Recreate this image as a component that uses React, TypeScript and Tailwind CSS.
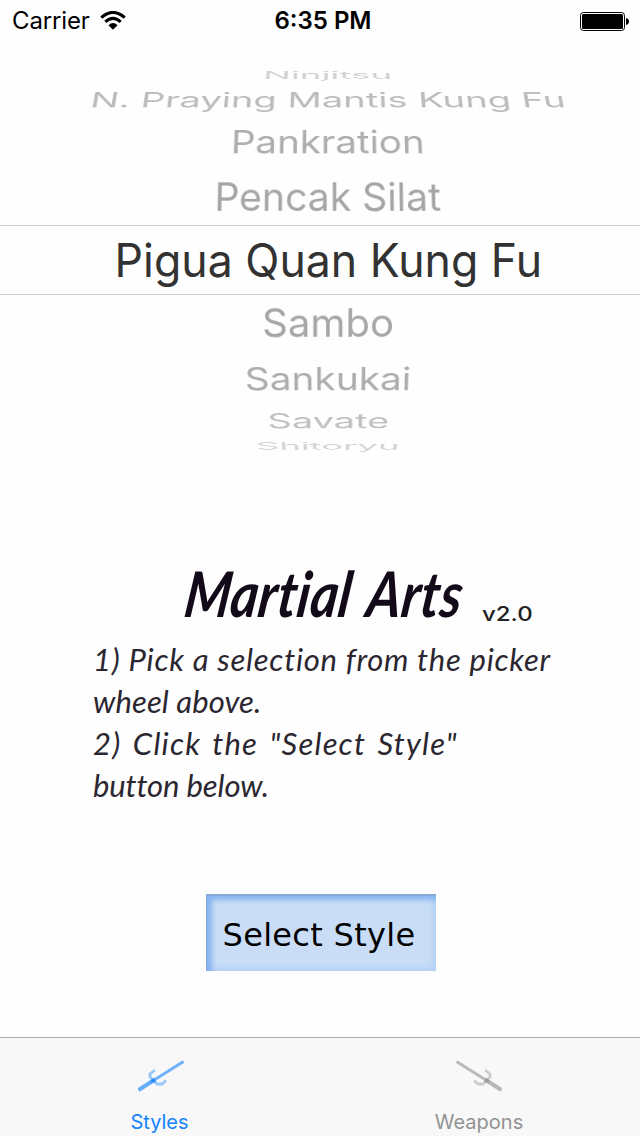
import React, { useState } from 'react';

interface PickerRow {
    label: string;
    row: string;
    text: string;
}

const pickerRows: PickerRow[] = [
    { label: 'Ninjitsu', row: 'h-[23px]', text: 'text-[#d2d2d2] [transform:perspective(2200px)_rotateX(76deg)_scaleX(0.875)]' },
    { label: 'N. Praying Mantis Kung Fu', row: 'h-[28px]', text: 'text-[#bcbcbc] [transform:perspective(2200px)_rotateX(60.5deg)_scaleX(0.906)]' },
    { label: 'Pankration', row: 'h-[55px]', text: 'text-[#adadad] [transform:perspective(2200px)_rotateX(41deg)_scaleX(0.915)]' },
    { label: 'Pencak Silat', row: 'h-[56px]', text: 'text-[#a6a6a6] [transform:perspective(2200px)_rotateX(23deg)_scaleX(0.93)]' },
    { label: 'Pigua Quan Kung Fu', row: 'h-[70px] border-y border-[#c8c8c8]', text: 'text-[46px] text-[#323232] [transform:scaleX(0.97)]' },
    { label: 'Sambo', row: 'h-[56px]', text: 'text-[#a6a6a6] [transform:perspective(2200px)_rotateX(-23deg)_scaleX(0.955)]' },
    { label: 'Sankukai', row: 'h-[55px]', text: 'text-[#adadad] [transform:perspective(2200px)_rotateX(-41deg)_scaleX(0.925)]' },
    { label: 'Savate', row: 'h-[29px]', text: 'text-[#c0c0c0] [transform:perspective(2200px)_rotateX(-60.5deg)_scaleX(0.905)]' },
    { label: 'Shitoryu', row: 'h-[22px]', text: 'text-[#d4d4d4] [transform:perspective(2200px)_rotateX(-76deg)_scaleX(0.87)]' },
];

const WifiIcon = () => (
    <svg className="ml-[10px] h-[19px] w-[26px] -translate-y-px" viewBox="0 0 26 19" fill="none" stroke="black">
        <path d="M1.3 6.6 Q13 -3.7 24.7 6.6" strokeWidth="3.1" />
        <path d="M5.3 10.8 Q13 4 20.7 10.8" strokeWidth="3" />
        <path d="M8.4 14.2 Q13 10 17.6 14.2 L13 18.7 Z" fill="black" stroke="none" />
    </svg>
);

const BatteryIcon = () => (
    <svg className="h-[19px] w-[49px]" viewBox="0 0 49 19">
        <rect x="0.5" y="0.5" width="44" height="18" rx="3" fill="none" stroke="black" />
        <rect x="2" y="2" width="41" height="15" rx="1.5" fill="black" />
        <path d="M46 6 q3 .6 3 3.5 t-3 3.5 z" fill="black" />
    </svg>
);

const SaiIcon = ({ className }: { className?: string }) => (
    <svg className={`h-8 w-[46px] ${className ?? ''}`} viewBox="0 0 46 32" fill="none" stroke="currentColor">
        <path d="M0.5 30 L17 19.5" strokeWidth="4" opacity="0.65" />
        <path d="M13 22 L45.5 1.5" strokeWidth="3" opacity="0.6" />
        <path d="M17 10 L12 14 V17 L15.5 20.5" strokeWidth="2.8" opacity="0.42" />
        <path d="M15.5 20.5 L19 24 H24 L28 20.5" strokeWidth="2.8" opacity="0.42" />
    </svg>
);

const App: React.FC = () => {
    const [tab, setTab] = useState<'styles' | 'weapons'>('styles');

    return (
        <div className="flex h-[1136px] w-[640px] flex-col overflow-hidden bg-[#fefefe] font-['Inter',sans-serif] text-black">
            <header className="grid h-10 grid-cols-3 items-center pt-px">
                <div className="flex items-center pl-3">
                    <span className="text-[24px] leading-10 tracking-[-0.15px]">Carrier</span>
                    <WifiIcon />
                </div>
                <span className="pl-1.5 text-center text-[24px] leading-10 font-semibold whitespace-nowrap">6:35 PM</span>
                <div className="flex justify-end pr-[11px]">
                    <BatteryIcon />
                </div>
            </header>

            <ul className="mt-[23px] flex flex-col">
                {pickerRows.map(({ label, row, text }) => (
                    <li key={label} className={`flex items-center justify-center pl-4 ${row}`}>
                        <span className={`text-[42px] leading-none whitespace-nowrap ${text}`}>{label}</span>
                    </li>
                ))}
            </ul>

            <section className="mt-[94px] flex h-[267px] flex-col pl-[93px] font-['Lato',sans-serif] italic">
                <div className="flex h-[87px] items-end pl-[87px]">
                    <h1 className="mb-[3px] w-[302px] origin-bottom-left text-[63px] leading-[84px] font-bold tracking-[0.4px] whitespace-nowrap text-[#120a18] [word-spacing:6px] [transform:scaleX(0.84)_skewX(-9deg)]">
                        Martial Arts
                    </h1>
                    <span className="mb-px origin-left scale-x-[1.2] text-[20px] leading-[46px] font-medium text-[#222] not-italic font-['Inter',sans-serif]">v2.0</span>
                </div>
                <div className="flex flex-col text-[31px] leading-[42px] whitespace-nowrap text-[#2b2630]">
                    <p className="tracking-[0.75px]">1) Pick a selection from the picker</p>
                    <p className="tracking-[0.1px]">wheel above.</p>
                    <p className="tracking-[1.2px] [word-spacing:3px]">2) Click the "Select Style"</p>
                    <p className="tracking-[-0.1px]">button below.</p>
                </div>
            </section>

            <button className="mt-[76px] ml-[206px] h-[77px] w-[230px] bg-[#c9ddf6] pt-1 pr-1 font-['DejaVu_Sans',sans-serif] text-[32px] tracking-[0.3px] text-black shadow-[inset_1px_2px_0_#86a9d6,inset_6px_6px_5px_#86b5f0,inset_-4px_-4px_5px_#b4d2f6]">
                Select Style
            </button>

            <nav className="mt-auto grid h-[99px] grid-cols-2 border-t border-[#adadad] bg-[#f8f8f8] text-[20px]">
                <button
                    onClick={() => setTab('styles')}
                    className={`flex flex-col items-center pt-[22px] pr-px ${tab === 'styles' ? 'text-[#1683fb]' : 'text-[#929292]'}`}
                >
                    <SaiIcon className="ml-0.5" />
                    <span className="mt-[18px] leading-6">Styles</span>
                </button>
                <button
                    onClick={() => setTab('weapons')}
                    className={`flex flex-col items-center pt-[22px] pr-[2px] ${tab === 'weapons' ? 'text-[#1683fb]' : 'text-[#929292]'}`}
                >
                    <SaiIcon className="-scale-x-100" />
                    <span className="mt-[18px] leading-6">Weapons</span>
                </button>
            </nav>
        </div>
    );
};

export default App;
